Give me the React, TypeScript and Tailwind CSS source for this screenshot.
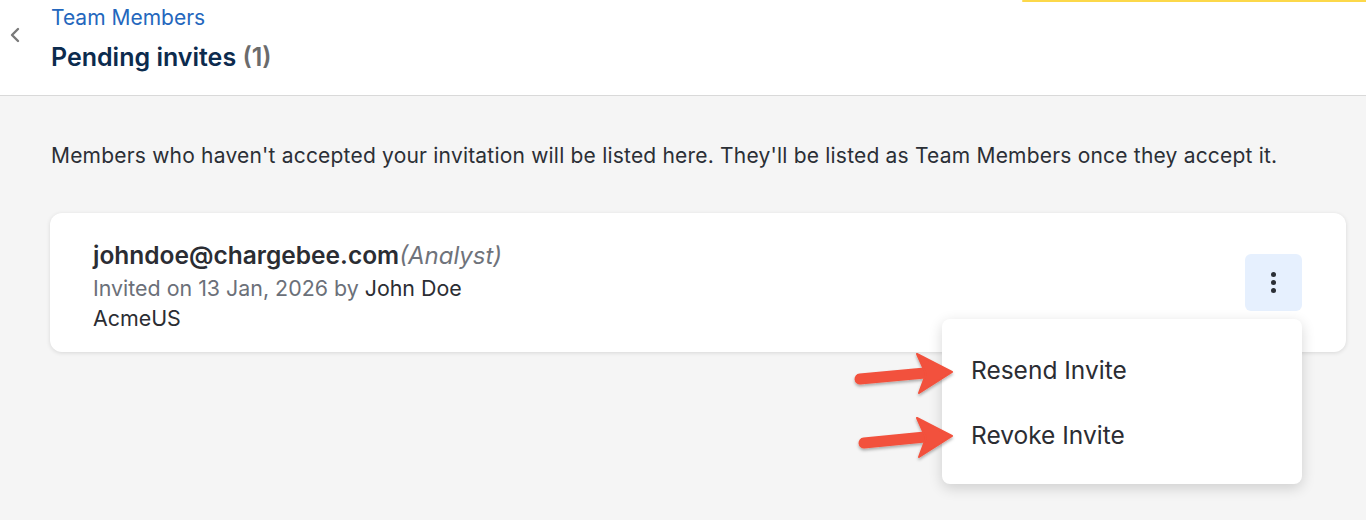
import React from 'react';

const Arrow: React.FC<{ y: number; x0: number }> = ({ y, x0 }) => (
  <g filter="url(#arrowShadow)">
    <line x1={x0} y1={y + 8} x2={925} y2={y + 2} stroke="#f2513c" strokeWidth={11} strokeLinecap="round" />
    <polygon points={`917,${y - 17} 952,${y + 1} 919,${y + 22} 926,${y + 3}`} fill="#f2513c" strokeLinejoin="round" stroke="#f2513c" strokeWidth={2} />
  </g>
);

const App: React.FC = () => {
  return (
    <div className="relative w-[1366px] h-[520px] overflow-hidden bg-[#f5f5f5] font-['Inter',sans-serif] text-[#2b2f36]">
      {/* header */}
      <header className="relative h-[96px] bg-white border-b border-[#d9d9d9] flex items-start">
        <div className="absolute top-0 left-[1022px] right-0 h-[2px] bg-[#fcd84a] rounded-l-full" />
        <button className="w-[51px] h-[70px] flex items-center justify-center text-[#7a7a7a]">
          <svg width="12" height="16" viewBox="0 0 12 16" fill="none" className="-ml-[22px]">
            <path d="M9 2L3 8L9 14" stroke="currentColor" strokeWidth="2.4" strokeLinecap="round" strokeLinejoin="round" />
          </svg>
        </button>
        <div className="pt-[3px]">
          <a className="block text-[21px] leading-[30px] text-[#2467bd]">Team Members</a>
          <h1 className="mt-[8px] text-[25px] leading-[32px] font-semibold text-[#0c2b4e]">
            Pending invites <span className="text-[#6b6b6b]">(1)</span>
          </h1>
        </div>
      </header>

      {/* body */}
      <main className="pl-[50px] pr-[20px] pt-[46px]">
        <p className="text-[21px] leading-[28px] tracking-[0.2px] pl-px whitespace-nowrap">
          Members who haven't accepted your invitation will be listed here. They'll be listed as Team Members once they accept it.
        </p>

        <div className="relative mt-[43px] bg-white rounded-[12px] shadow-[0_1px_4px_rgba(0,0,0,0.12)] h-[139px] flex items-center justify-between pl-[43px] pr-[44px]">
          <div className="flex flex-col pt-[6px]">
            <div className="text-[24.5px] leading-[32px] font-semibold text-[#2b2d33]">
              johndoe@chargebee.com<span className="font-normal italic text-[#6f737b] text-[24px]">(Analyst)</span>
            </div>
            <div className="text-[21.4px] leading-[32px] text-[#6b7079]">
              Invited on 13 Jan, 2026 by <span className="text-[#2b2d33]">John Doe</span>
            </div>
            <div className="text-[21.4px] leading-[29px] text-[#2b2d33]">AcmeUS</div>
          </div>
          <button className="w-[57px] h-[57px] rounded-[6px] bg-[#e6f0fe] flex flex-col items-center justify-center gap-[3px] mb-[1px]">
            <span className="w-[5px] h-[5px] rounded-full bg-[#2b2f36]" />
            <span className="w-[5px] h-[5px] rounded-full bg-[#2b2f36]" />
            <span className="w-[5px] h-[5px] rounded-full bg-[#2b2f36]" />
          </button>

          {/* dropdown menu */}
          <div className="absolute top-[106px] right-[44px] w-[360px] h-[165px] bg-white rounded-[8px] shadow-[0_4px_14px_rgba(0,0,0,0.16)] flex flex-col pt-[35px] pl-[29px] z-10">
            <div className="text-[24.5px] leading-[32px] text-[#2b2d33]">Resend Invite</div>
            <div className="mt-[33px] text-[24.5px] leading-[32px] text-[#2b2d33]">Revoke Invite</div>
          </div>
        </div>
      </main>

      {/* annotation arrows */}
      <svg className="absolute inset-0 pointer-events-none z-20" width="1366" height="520">
        <defs>
          <filter id="arrowShadow" x="-20%" y="-50%" width="140%" height="200%">
            <feDropShadow dx="0" dy="2" stdDeviation="1.5" floodColor="#000" floodOpacity="0.3" />
          </filter>
        </defs>
        <Arrow y={371} x0={860} />
        <Arrow y={435} x0={864} />
      </svg>
    </div>
  );
};

export default App;
